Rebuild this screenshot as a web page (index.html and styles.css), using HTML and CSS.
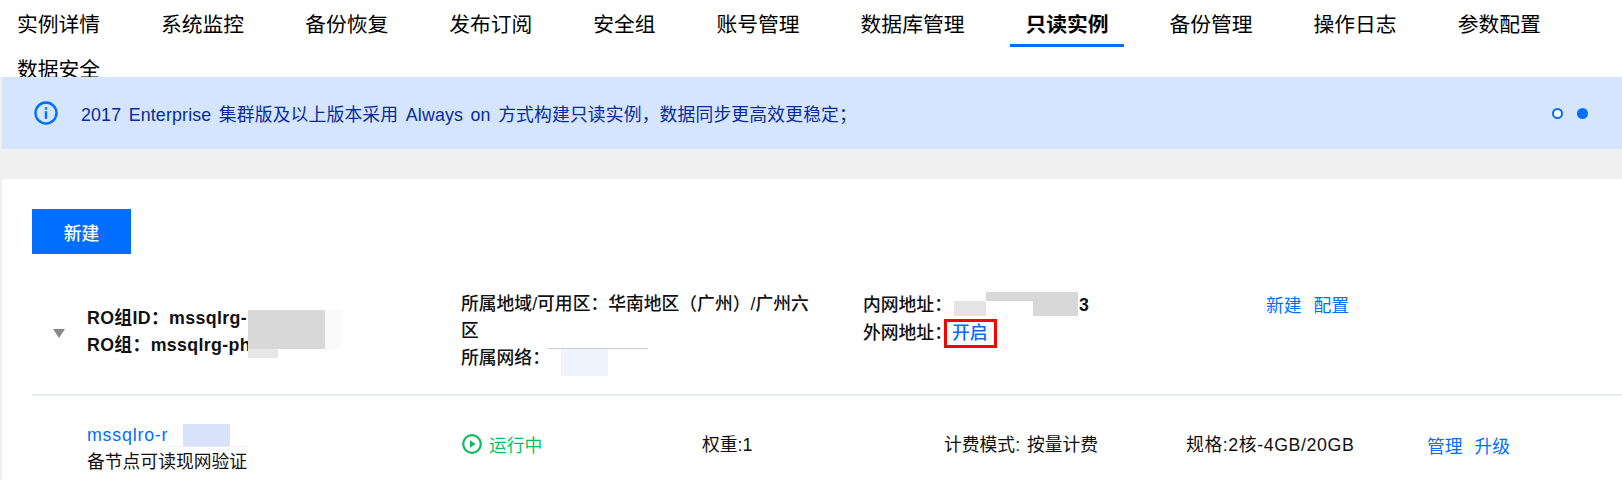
FILE: index.html
```html
<!DOCTYPE html>
<html lang="zh-CN">
<head>
    <meta charset="UTF-8">
    <meta name="viewport" content="width=device-width, initial-scale=1.0">
    <title>只读实例</title>
    <link rel="stylesheet" href="styles.css">
</head>
<body>
    <nav class="tabs">
        <a class="tab">实例详情</a>
        <a class="tab">系统监控</a>
        <a class="tab">备份恢复</a>
        <a class="tab">发布订阅</a>
        <a class="tab">安全组</a>
        <a class="tab">账号管理</a>
        <a class="tab">数据库管理</a>
        <a class="tab tab-active">只读实例</a>
        <a class="tab">备份管理</a>
        <a class="tab">操作日志</a>
        <a class="tab">参数配置</a>
        <a class="tab">数据安全</a>
    </nav>

    <div class="notice">
        <svg class="notice-icon" viewBox="0 0 24 24" width="24" height="24">
            <circle cx="12" cy="12" r="10.5" fill="none" stroke="#006eff" stroke-width="2.4"/>
            <rect x="10.8" y="10.2" width="2.4" height="7.6" fill="#006eff"/>
            <rect x="10.8" y="6.2" width="2.4" height="2.4" fill="#006eff"/>
        </svg>
        <p class="notice-text">2017 Enterprise 集群版及以上版本采用 Always on 方式构建只读实例，数据同步更高效更稳定；</p>
        <div class="dots">
            <span class="dot"></span>
            <span class="dot dot-on"></span>
        </div>
    </div>

    <main class="card">
        <button class="btn-primary">新建</button>

        <section class="group-row">
            <span class="caret"></span>
            <div class="group-name">
                <p>RO组ID：mssqlrg-</p>
                <p>RO组：mssqlrg-ph</p>
                <i class="mask mask-name"></i>
                <i class="mask mask-name-light"></i>
                <i class="mask mask-name-low"></i>
            </div>
            <div class="group-zone">
                <p>所属地域/可用区：华南地区（广州）/广州六区</p>
                <p>所属网络：</p>
                <i class="mask mask-vpc"></i>
                <i class="mask mask-vpc-line"></i>
            </div>
            <div class="group-addr">
                <p class="addr-inner">内网地址：<span class="addr-tail">3</span></p>
                <p>外网地址：<a class="link link-boxed">开启</a></p>
                <i class="mask mask-ip-a"></i>
                <i class="mask mask-ip-b"></i>
                <i class="mask mask-ip-c"></i>
            </div>
            <div class="actions actions-group">
                <a class="link">新建</a>
                <a class="link">配置</a>
            </div>
        </section>

        <section class="instance-row">
            <div class="instance-name">
                <a class="link instance-link">mssqlro-r</a>
                <p>备节点可读现网验证</p>
                <i class="mask mask-ro"></i>
                <i class="mask mask-ro-light"></i>
            </div>
            <div class="instance-status">
                <svg viewBox="0 0 20 20" width="20" height="20">
                    <circle cx="10" cy="10" r="8.8" fill="none" stroke="#0abf5b" stroke-width="2.2"/>
                    <path d="M8 6.2 L13.6 10 L8 13.8 Z" fill="#0abf5b"/>
                </svg>
                <span>运行中</span>
            </div>
            <div class="instance-weight">权重:1</div>
            <div class="instance-billing">计费模式: 按量计费</div>
            <div class="instance-spec">规格:2核-4GB/20GB</div>
            <div class="actions actions-instance">
                <a class="link">管理</a>
                <a class="link">升级</a>
            </div>
        </section>
    </main>
</body>
</html>
```

FILE: styles.css
```css
html, body {
    margin: 0;
    height: 480px;
    overflow: hidden;
}

body {
    background: #f0f0f0;
    color: #111;
    font-family: "Liberation Sans", "Noto Sans CJK SC", sans-serif;
    font-size: 17.8px;
}

p {
    margin: 0;
}

.link {
    color: #006eff;
}

/* tabs */
.tabs {
    display: flex;
    flex-wrap: wrap;
    column-gap: 31px;
    box-sizing: border-box;
    height: 77px;
    padding: 3px 0 0 2px;
    overflow: hidden;
    background: #fff;
}

.tab {
    position: relative;
    height: 45px;
    padding: 0 15px;
    font-size: 20.78px;
    line-height: 44px;
    color: #000;
}

.tab-active {
    font-weight: 700;
}

.tab-active::after {
    content: '';
    position: absolute;
    left: 0;
    right: 0;
    bottom: 1px;
    height: 3px;
    background: #006eff;
}

/* notice */
.notice {
    display: flex;
    align-items: center;
    box-sizing: border-box;
    height: 72px;
    margin-left: 2px;
    padding: 0 34px 0 32px;
    background: #d4e5fd;
}

.notice-icon {
    flex: none;
    margin-right: 23px;
}

.notice-text {
    flex: 1;
    color: #0a2a9c;
    word-spacing: 2.4px;
    letter-spacing: 0.16px;
}

.dots {
    display: flex;
    gap: 14px;
}

.dot {
    box-sizing: border-box;
    width: 11px;
    height: 11px;
    border: 2px solid #006eff;
    border-radius: 50%;
    background: #fff;
}

.dot-on {
    background: #006eff;
}

/* card */
.card {
    box-sizing: border-box;
    height: 301px;
    margin: 30px 0 0 2px;
    padding: 30px 0 0 30px;
    overflow: hidden;
    background: #fff;
}

.btn-primary {
    display: block;
    width: 99px;
    height: 45px;
    padding: 0;
    border: 0;
    background: #006eff;
    color: #fff;
    font: inherit;
    font-weight: 500;
}

.group-row {
    display: flex;
    box-sizing: border-box;
    height: 142px;
    padding-top: 36px;
    border-bottom: 2px solid #e8ebf0;
    line-height: 27px;
    font-weight: 500;
}

.caret {
    flex: none;
    width: 0;
    height: 0;
    margin: 39px 22px 0 21px;
    border-left: 6px solid transparent;
    border-right: 6px solid transparent;
    border-top: 9px solid #888;
}

.group-name,
.group-zone,
.group-addr,
.instance-name {
    position: relative;
}

.group-name {
    flex: none;
    width: 374px;
    padding-top: 15px;
    font-weight: 700;
    letter-spacing: 0.35px;
}

.group-zone {
    flex: none;
    width: 355px;
    margin-right: 47px;
    padding-top: 1px;
}

.group-addr {
    flex: none;
    width: 403px;
    padding-top: 1px;
    line-height: 28px;
}

.addr-inner {
    position: relative;
}

.addr-tail {
    position: absolute;
    left: 216px;
    top: 0;
    font-weight: 700;
}

.link-boxed {
    position: relative;
}

.link-boxed::after {
    content: '';
    position: absolute;
    left: -8px;
    right: -9px;
    top: -4px;
    bottom: -5px;
    border: 3px solid #f00;
}

.actions {
    display: flex;
    gap: 12px;
    font-weight: 400;
}

.actions-group {
    padding-top: 3px;
    align-self: flex-start;
}

/* mosaic patches over hidden values */
.mask {
    position: absolute;
}

.mask-name { left: 161px; top: 20px; width: 77px; height: 39px; background: #d8d8d8; }
.mask-name-light { left: 238px; top: 20px; width: 16px; height: 39px; background: #fafafa; }
.mask-name-low { left: 161px; top: 59px; width: 30px; height: 9px; background: #e6e6e6; }
.mask-vpc { left: 100px; top: 58px; width: 47px; height: 28px; background: #eff4fd; }
.mask-vpc-line { left: 87px; top: 58px; width: 100px; height: 1px; background: #ccc; }
.mask-ip-a { left: 91px; top: 11px; width: 32px; height: 15px; background: #e4e4e4; }
.mask-ip-b { left: 123px; top: 2px; width: 92px; height: 9px; background: #d8d8d8; }
.mask-ip-c { left: 170px; top: 11px; width: 45px; height: 15px; background: #d8d8d8; }

/* instance row */
.instance-row {
    display: flex;
    padding-top: 26px;
    line-height: 27px;
}

.instance-name {
    flex: none;
    width: 374px;
    margin-left: 55px;
}

.instance-link {
    letter-spacing: 0.8px;
}

.instance-name p {
    width: 161px;
    overflow: hidden;
    white-space: nowrap;
}

.mask-ro { left: 96px; top: 2px; width: 47px; height: 22px; background: #d8e3fb; }
.mask-ro-light { left: 81px; top: 24px; width: 80px; height: 1px; background: #eee; }

.instance-status {
    display: flex;
    align-items: flex-start;
    gap: 7px;
    flex: none;
    box-sizing: border-box;
    width: 241px;
    padding: 11px 0 0 1px;
    color: #0abf5b;
}

.instance-status svg {
    margin-top: 1px;
}

.instance-weight,
.instance-billing,
.instance-spec {
    flex: none;
    width: 242px;
    padding-top: 10px;
}

.instance-billing {
    word-spacing: 2px;
}

.instance-spec {
    width: 241px;
    letter-spacing: 0.6px;
}

.actions-instance {
    padding-top: 12px;
}
```
